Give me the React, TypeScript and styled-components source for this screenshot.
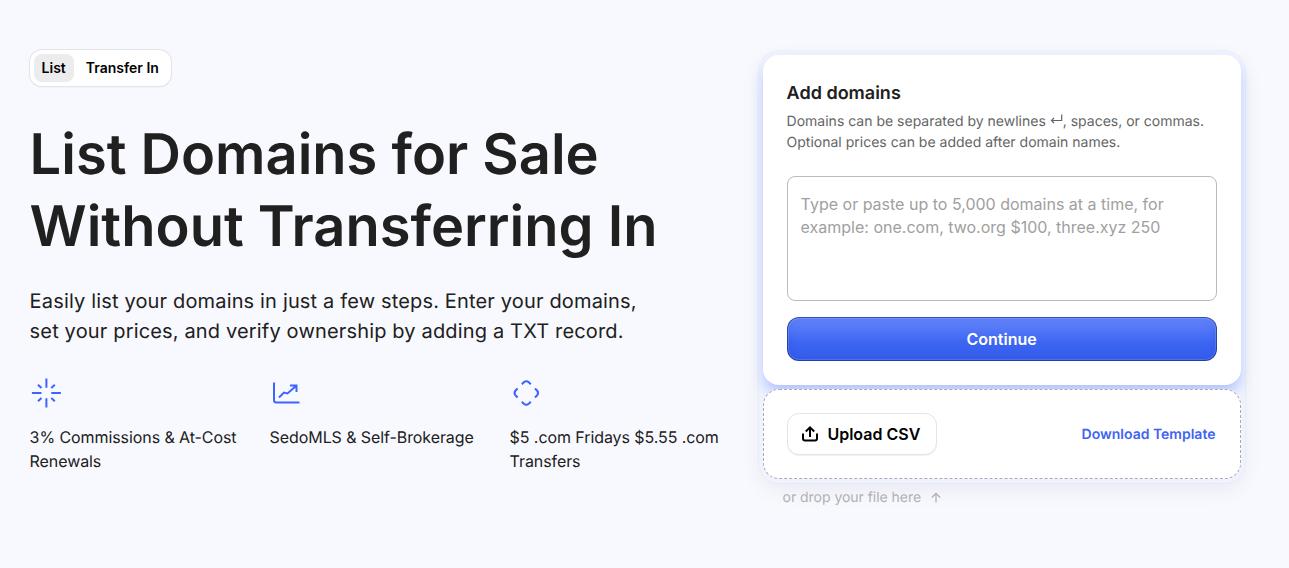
import React from 'react';
import styled, { createGlobalStyle } from "styled-components";

const GlobalStyle = createGlobalStyle`
  * {
    box-sizing: border-box;
  }
  body {
    margin: 0;
    background: #f8f9fe;
    color: #202020;
    font-family: Inter, "Liberation Sans", sans-serif;
    -webkit-font-smoothing: antialiased;
    text-rendering: geometricPrecision;
  }
`;

const Page = styled.main`
  display: flex;
  justify-content: space-between;
  height: 568px;
  padding: 50px 44px 0 29.6px;
`;

const Intro = styled.section`
  width: 700px;
`;

const Tabs = styled.div`
  display: inline-flex;
  gap: 4px;
  height: 36px;
  padding: 4px;
  background: #fff;
  border-radius: 12px;
  box-shadow: 0 0 0 1px #e3e4ea, 0 1px 2px rgba(0, 0, 0, 0.1);
`;

const Tab = styled.button<{ $active?: boolean }>`
  height: 28px;
  padding: 0 8px;
  border: 0;
  border-radius: 8px;
  background: ${(p) => (p.$active ? '#ececec' : 'transparent')};
  color: #000;
  font: 600 14px/28px Inter, sans-serif;
`;

const Title = styled.h1`
  margin: 32px 0 0;
  font-size: 56px;
  font-weight: 600;
  line-height: 72px;
  white-space: nowrap;
`;

const Lead = styled.p`
  margin: 24px 0 0;
  font-size: 20px;
  line-height: 30px;
  letter-spacing: 0.16px;
`;

const Features = styled.div`
  display: grid;
  grid-template-columns: 240px 240px 220px;
  margin-top: 31px;
`;

const Feature = styled.div`
  font-size: 16px;
  line-height: 24px;
  letter-spacing: -0.08px;

  svg {
    display: block;
    margin-bottom: 16px;
  }
`;

const Shell = styled.section`
  width: 486px;
  height: 432px;
  margin-top: 1px;
  padding: 4px;
  border-radius: 20px;
  background: #eff3ff;
  box-shadow: 0 0 0 1px rgba(0, 0, 0, 0.025), 0 8px 24px -4px rgba(20, 30, 70, 0.08);
`;

const Card = styled.div`
  position: relative;
  height: 330px;
  padding: 25px 23.6px 24px;
  background: #fff;
  border-radius: 16px;
  box-shadow: 0 8px 14px -2px rgba(60, 100, 255, 0.38);
`;

const CardTitle = styled.h2`
  margin: 0;
  font-size: 18px;
  font-weight: 600;
  line-height: 28px;
`;

const Help = styled.p`
  margin: 3px 0 0;
  color: #646464;
  font-size: 14px;
  line-height: 21px;
  white-space: nowrap;
`;

const DomainInput = styled.textarea`
  display: block;
  width: 430px;
  height: 125px;
  margin-top: 23px;
  padding: 16px 13px;
  border: 1px solid #bbb;
  border-radius: 8px;
  background: #fff;
  font: 400 16px/23px Inter, sans-serif;
  resize: none;

  &::placeholder {
    color: #a0a0a0;
  }
`;

const Submit = styled.button`
  width: 430px;
  height: 44px;
  margin-top: 16px;
  border: 1px solid rgba(20, 40, 130, 0.6);
  border-radius: 12px;
  background: linear-gradient(#6688fb, #3c64f2 60%, #345dec) border-box;
  box-shadow: inset 0 0 0 1px rgba(255, 255, 255, 0.14), inset 0 0 10px rgba(30, 60, 190, 0.2);
  color: #fff;
  font: 600 16px/24px Inter, sans-serif;
`;

const DropZone = styled.div`
  position: relative;
  display: flex;
  align-items: center;
  justify-content: space-between;
  height: 90px;
  margin-top: 4px;
  padding: 0 24.5px 0 23px;
  border: 1px dashed #a9a9b0;
  border-radius: 16px;
  background: #fff;
`;

const Upload = styled.button`
  display: flex;
  align-items: center;
  gap: 8.4px;
  width: 150px;
  height: 42px;
  padding: 0 13px;
  border: 1px solid #e4e4e4;
  border-radius: 12px;
  background: #fff;
  box-shadow: 0 1px 1px rgba(0, 0, 0, 0.06);
  color: #000;
  font: 600 16px/24px Inter, sans-serif;
  white-space: nowrap;
`;

const Template = styled.a`
  padding-top: 2px;
  color: #3e63f4;
  font-size: 14px;
  font-weight: 600;
  line-height: 20px;
`;

const DropHint = styled.div`
  display: flex;
  align-items: center;
  gap: 8px;
  margin: 9px 0 0 19.6px;
  color: #b0b0b5;
  font-size: 14px;
  line-height: 20px;
  letter-spacing: -0.04px;
`;

const SparkIcon = () => (
  <svg width="32" height="32" viewBox="0 0 32 32" fill="none" stroke="#3e63ff" strokeWidth="2">
    <path d="M16.4 1.5v9.2M16.4 21.3v9.2M1.9 16h9.6M21.3 16h9.6M8 7.7l3.5 3.3M24.8 7.7L21.3 11M8 24.3l3.5-3.3M24.8 24.3L21.3 21" />
  </svg>
);

const ChartIcon = () => (
  <svg width="32" height="32" viewBox="0 0 32 32" fill="none" stroke="#3e63ff" strokeWidth="2">
    <path d="M4 5.5V23q0 2.5 2.5 2.5H29.5M9 20.5l5-5 3.5 1L26 9M20 8.5h6.5v6.5" />
  </svg>
);

const DiamondIcon = () => (
  <svg width="32" height="32" viewBox="0 0 32 32" fill="none" stroke="#3e63ff" strokeWidth="2">
    <path d="M12 7.3l2-2q2.5-2.2 5 0l2 2M12 24.7l2 2q2.5 2.2 5 0l2-2M7.8 11.5l-2 2q-2.2 2.5 0 5l2 2M25.2 11.5l2 2q2.2 2.5 0 5l-2 2" transform="translate(-0.2 0)" />
  </svg>
);

const UploadIcon = () => (
  <svg width="18" height="18" viewBox="0 0 18 18" fill="none" stroke="#000" strokeWidth="2">
    <path d="M9 12V2.5M4.8 6.5L9 2.3l4.2 4.2M2 8.5v5q0 2 2 2h10q2 0 2-2v-5" />
  </svg>
);

const ReturnIcon = () => (
  <svg width="13" height="13" viewBox="0 0 13 13" fill="none" stroke="#646464" strokeWidth="1.2">
    <path d="M11.7 1.5v6H1.5M4 5l-2.5 2.5L4 10" />
  </svg>
);

const ArrowUpIcon = () => (
  <svg width="14" height="14" viewBox="0 0 14 14" fill="none" stroke="#b0b0b5" strokeWidth="1.3">
    <path d="M7 11.5V2.3M2.8 6.5L7 2.3l4.2 4.2" />
  </svg>
);

const App: React.FC = () => {
  return (
    <>
      <GlobalStyle />
      <Page>
        <Intro>
          <Tabs>
            <Tab $active>List</Tab>
            <Tab>Transfer In</Tab>
          </Tabs>
          <Title>List Domains for Sale<br />Without Transferring In</Title>
          <Lead>
            Easily list your domains in just a few steps. Enter your domains,<br />
            set your prices, and verify ownership by adding a TXT record.
          </Lead>
          <Features>
            <Feature><SparkIcon />3% Commissions &amp; At-Cost<br />Renewals</Feature>
            <Feature><ChartIcon />SedoMLS &amp; Self-Brokerage</Feature>
            <Feature><DiamondIcon />$5 .com Fridays $5.55 .com<br />Transfers</Feature>
          </Features>
        </Intro>
        <Shell>
          <Card>
            <CardTitle>Add domains</CardTitle>
            <Help>
              Domains can be separated by newlines <ReturnIcon />, spaces, or commas.<br />
              Optional prices can be added after domain names.
            </Help>
            <DomainInput placeholder="Type or paste up to 5,000 domains at a time, for example: one.com, two.org $100, three.xyz 250" />
            <Submit>Continue</Submit>
          </Card>
          <DropZone>
            <Upload><UploadIcon />Upload CSV</Upload>
            <Template>Download Template</Template>
          </DropZone>
          <DropHint>or drop your file here <ArrowUpIcon /></DropHint>
        </Shell>
      </Page>
    </>
  );
}

export default App;
